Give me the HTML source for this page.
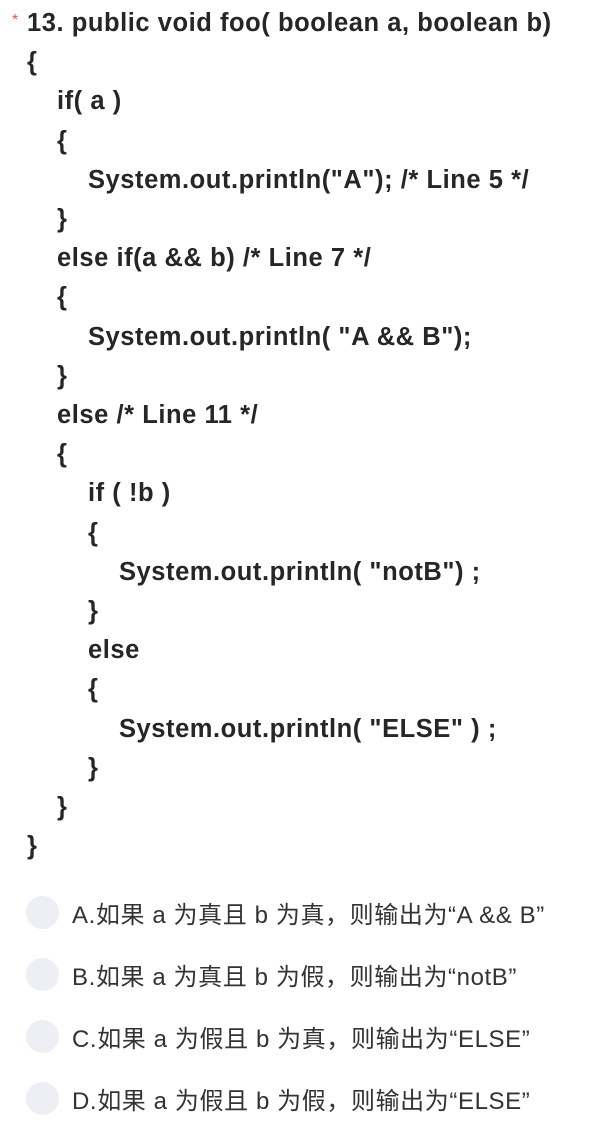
<!DOCTYPE html>
<html><head><meta charset="utf-8"><style>
body{margin:0;background:#fff;width:597px;height:1139px;overflow:hidden;font-family:"Liberation Sans","Noto Sans CJK SC",sans-serif;color:#262626;}
.code{position:absolute;top:4px;left:0;font-weight:bold;font-size:25.5px;letter-spacing:0.55px;line-height:39.2px;white-space:pre;}
.l{position:absolute;white-space:pre;}
.star{position:absolute;left:12px;top:12px;color:#f5544b;font-size:16px;}
.opt{position:absolute;left:26px;height:32px;display:flex;align-items:center;}
.opt i{width:33px;height:33px;border-radius:50%;background:#eeeff4;display:block;flex:none}
.opt span{margin-left:13px;font-size:24px;color:#333;letter-spacing:0.6px;white-space:nowrap}
</style></head><body>
<div class="star">*</div>
<div class="code">
<div class="l" style="left:27px;top:0">13. public void foo( boolean a, boolean b)</div>
<div class="l" style="left:27px;top:39.2px">{</div>
<div class="l" style="left:57px;top:78.4px">if( a )</div>
<div class="l" style="left:57px;top:117.6px">{</div>
<div class="l" style="left:88px;top:156.8px">System.out.println("A"); /* Line 5 */</div>
<div class="l" style="left:57px;top:196px">}</div>
<div class="l" style="left:57px;top:235.2px">else if(a &amp;&amp; b) /* Line 7 */</div>
<div class="l" style="left:57px;top:274.4px">{</div>
<div class="l" style="left:88px;top:313.6px">System.out.println( "A &amp;&amp; B");</div>
<div class="l" style="left:57px;top:352.8px">}</div>
<div class="l" style="left:57px;top:392px">else /* Line 11 */</div>
<div class="l" style="left:57px;top:431.2px">{</div>
<div class="l" style="left:88px;top:470.4px">if ( !b )</div>
<div class="l" style="left:88px;top:509.6px">{</div>
<div class="l" style="left:119px;top:548.8px">System.out.println( "notB") ;</div>
<div class="l" style="left:88px;top:588px">}</div>
<div class="l" style="left:88px;top:627.2px">else</div>
<div class="l" style="left:88px;top:666.4px">{</div>
<div class="l" style="left:119px;top:705.6px">System.out.println( "ELSE" ) ;</div>
<div class="l" style="left:88px;top:744.8px">}</div>
<div class="l" style="left:57px;top:784px">}</div>
<div class="l" style="left:27px;top:823.2px">}</div>
</div>
<div class="opt" style="top:896px"><i></i><span>A.如果 a 为真且 b 为真，则输出为“A &amp;&amp; B”</span></div>
<div class="opt" style="top:958px"><i></i><span>B.如果 a 为真且 b 为假，则输出为“notB”</span></div>
<div class="opt" style="top:1020px"><i></i><span>C.如果 a 为假且 b 为真，则输出为“ELSE”</span></div>
<div class="opt" style="top:1082px"><i></i><span>D.如果 a 为假且 b 为假，则输出为“ELSE”</span></div>
</body></html>
